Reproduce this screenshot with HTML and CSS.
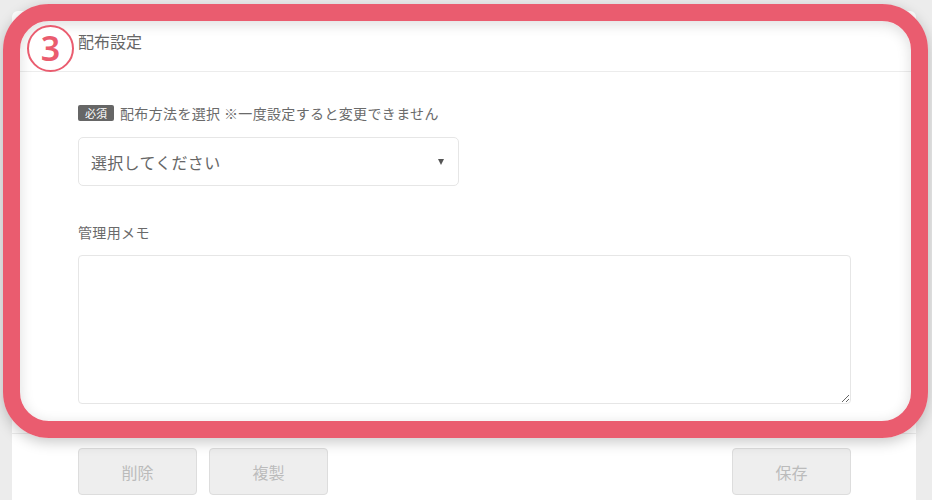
FILE: index.html
```html
<!DOCTYPE html>
<html lang="ja">
<head>
<meta charset="utf-8">
<link rel="stylesheet" href="styles.css">
</head>
<body>
<div class="page">
  <section class="card">
    <header class="card-head">配布設定</header>
    <div class="card-body">
      <div class="field-label"><span class="badge">必須</span>配布方法を選択 ※一度設定すると変更できません</div>
      <div class="select">
        <span class="select-text">選択してください</span>
        <span class="select-arrow"></span>
      </div>
      <div class="field-label memo-label">管理用メモ</div>
      <textarea class="memo"></textarea>
    </div>
    <footer class="card-foot">
      <div class="btn-group">
        <button class="btn">削除</button>
        <button class="btn">複製</button>
      </div>
      <button class="btn">保存</button>
    </footer>
  </section>
  <div class="highlight"></div>
  <div class="step">3</div>
</div>
</body>
</html>
```

FILE: styles.css
```css
* { box-sizing: border-box; }
html, body { margin: 0; padding: 0; }
body {
  background: #ececec;
  font-family: "Noto Sans CJK JP", "Noto Sans", sans-serif;
  color: #666;
  width: 932px;
  height: 500px;
  overflow: hidden;
}
.page {
  position: relative;
  padding: 11px 16px 0 12px;
}
.card {
  background: #fff;
  border-radius: 6px 6px 0 0;
  width: 904px;
}
.card-head {
  height: 61px;
  padding-left: 66px;
  display: flex;
  align-items: center;
  font-size: 16px;
  color: #666;
  border-bottom: 1px solid #ececec;
}
.card-body {
  padding: 30px 65px 29px 66px;
  display: flex;
  flex-direction: column;
}
.field-label {
  display: flex;
  align-items: center;
  font-size: 14px;
  color: #6a6a6a;
  line-height: 22px;
  letter-spacing: 0.35px;
}
.badge {
  background: #666;
  color: #fff;
  font-size: 11px;
  line-height: 16px;
  padding: 0 7px;
  border-radius: 2px;
  margin-right: 6px;
  letter-spacing: 0;
}
.select {
  margin-top: 13px;
  width: 381px;
  height: 49px;
  border: 1px solid #e6e6e6;
  border-radius: 5px;
  display: flex;
  align-items: center;
  justify-content: space-between;
  padding: 0 14px 0 12px;
}
.select-text {
  font-size: 16px;
  color: #666;
  letter-spacing: 0.3px;
}
.select-arrow {
  width: 0;
  height: 0;
  border-left: 3.5px solid transparent;
  border-right: 3.5px solid transparent;
  border-top: 6px solid #555;
}
.memo-label {
  margin-top: 35px;
}
.memo {
  margin-top: 12px;
  width: 773px;
  height: 149px;
  border: 1px solid #e6e6e6;
  border-radius: 4px;
  resize: vertical;
  font-family: inherit;
  display: block;
}
.card-foot {
  border-top: 1px solid #ececec;
  padding: 14px 65px 0 66px;
  display: flex;
  justify-content: space-between;
  height: 67px;
}
.btn-group {
  display: flex;
  gap: 12px;
}
.btn {
  width: 119px;
  height: 47px;
  background: #eeeeee;
  border: 1px solid #dddddd;
  border-radius: 4px;
  color: #bbb;
  font-size: 16px;
  font-family: inherit;
  padding: 0;
}
.highlight {
  position: absolute;
  left: 3px;
  top: 4px;
  width: 925px;
  height: 434px;
  border: 17px solid #ea5c6f;
  border-radius: 46px;
  box-shadow: 0 4px 14px rgba(0,0,0,0.22), inset 0 3px 14px rgba(0,0,0,0.14);
  pointer-events: none;
}
.step {
  position: absolute;
  left: 27px;
  top: 25px;
  width: 47px;
  height: 47px;
  border: 2px solid #ea5c6f;
  border-radius: 50%;
  background: #fff;
  color: #ea5c6f;
  font-family: "Noto Sans", sans-serif;
  font-weight: 600;
  font-size: 34px;
  line-height: 43px;
  text-align: center;
}
```
